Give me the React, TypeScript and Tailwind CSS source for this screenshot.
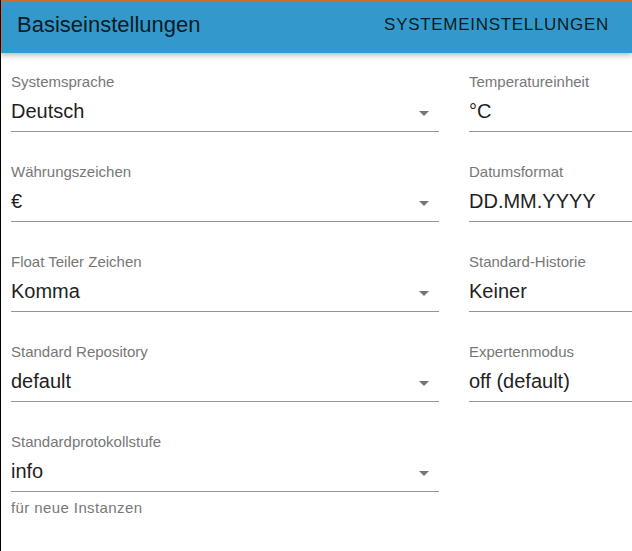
import React from "react";

type Field = {
  label: string;
  value: string;
  select?: boolean;
  helper?: string;
};

const left: Field[] = [
  { label: "Systemsprache", value: "Deutsch", select: true },
  { label: "Währungszeichen", value: "€", select: true },
  { label: "Float Teiler Zeichen", value: "Komma", select: true },
  { label: "Standard Repository", value: "default", select: true },
  {
    label: "Standardprotokollstufe",
    value: "info",
    select: true,
    helper: "für neue Instanzen",
  },
];

const right: Field[] = [
  { label: "Temperatureinheit", value: "°C" },
  { label: "Datumsformat", value: "DD.MM.YYYY" },
  { label: "Standard-Historie", value: "Keiner" },
  { label: "Expertenmodus", value: "off (default)" },
];

function Arrow() {
  return (
    <svg viewBox="0 0 24 24" className="h-6 w-6 fill-[#757575]">
      <path d="M7 10l5 5 5-5z" />
    </svg>
  );
}

function FieldBox({ f }: { f: Field }) {
  return (
    <div className="h-[90px] pt-[20px]">
      <div className="text-[15px] leading-[18px] text-[#777777]">{f.label}</div>
      <div className="relative mt-[7px] h-[34px] border-b border-[#949494]">
        <span className="block text-[20px] leading-[26px] text-[#1f1f1f]">
          {f.value}
        </span>
        {f.select && (
          <span className="absolute right-[3px] top-[3px]">
            <Arrow />
          </span>
        )}
      </div>
      {f.helper && (
        <div className="mt-[7px] text-[15px] leading-[18px] tracking-[0.4px] text-[#777777]">
          {f.helper}
        </div>
      )}
    </div>
  );
}

export default function App() {
  return (
    <div
      className="h-[551px] w-[632px] overflow-hidden bg-white border-l border-black"
      style={{ fontFamily: "'Liberation Sans', Arial, sans-serif" }}
    >
      <header className="relative z-10 -ml-px flex h-[53px] items-center justify-between border-t-2 border-l-2 border-[#d4692c] bg-[#3399cc] pb-[6px] pl-[15px] pr-[23px] shadow-[0_2px_6px_rgba(0,0,0,0.3)]">
        <h1 className="text-[22px] leading-[26px] text-[#0d1b24]">Basiseinstellungen</h1>
        <span className="text-[17px] leading-[20px] tracking-[0.7px] uppercase text-[#0d1b24]">
          Systemeinstellungen
        </span>
      </header>
      <div className="flex gap-[30px] pl-[10px]">
        <div className="w-[428px] shrink-0">
          {left.map((f) => (
            <FieldBox key={f.label} f={f} />
          ))}
        </div>
        <div className="w-[428px] shrink-0">
          {right.map((f) => (
            <FieldBox key={f.label} f={f} />
          ))}
        </div>
      </div>
    </div>
  );
}
